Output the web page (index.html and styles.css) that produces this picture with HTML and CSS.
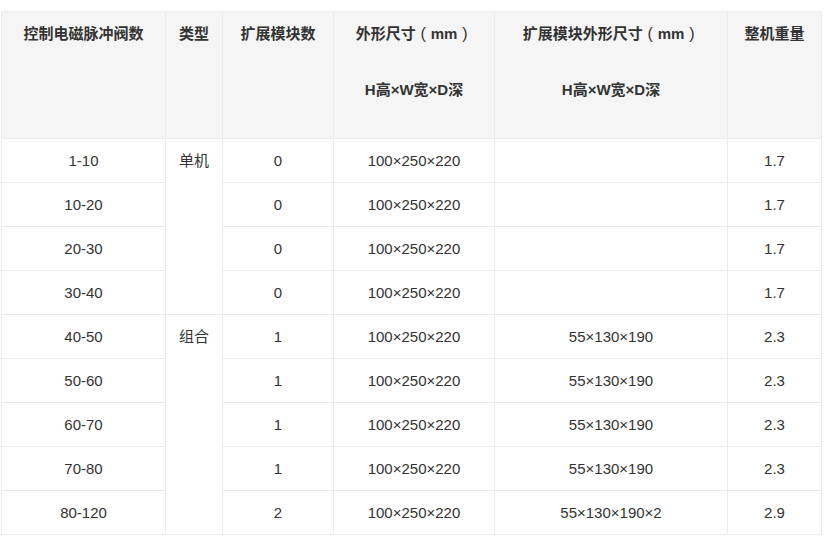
FILE: index.html
```html
<!DOCTYPE html>
<html lang="zh-CN">
<head>
<meta charset="utf-8">
<title>控制器规格</title>
<link rel="stylesheet" href="styles.css">
</head>
<body>
<div class="wrap">
<table class="spec">
<colgroup>
<col class="c1"><col class="c2"><col class="c3"><col class="c4"><col class="c5"><col class="c6">
</colgroup>
<thead>
<tr>
<th>控制电磁脉冲阀数</th>
<th>类型</th>
<th>扩展模块数</th>
<th>外形尺寸<span class="par">(</span>mm<span class="par">)</span><br><br>H高×W宽×D深</th>
<th>扩展模块外形尺寸<span class="par">(</span>mm<span class="par">)</span><br><br>H高×W宽×D深</th>
<th>整机重量</th>
</tr>
</thead>
<tbody>
<tr><td>1-10</td><td rowspan="4">单机</td><td>0</td><td>100×250×220</td><td></td><td>1.7</td></tr>
<tr><td>10-20</td><td>0</td><td>100×250×220</td><td></td><td>1.7</td></tr>
<tr><td>20-30</td><td>0</td><td>100×250×220</td><td></td><td>1.7</td></tr>
<tr><td>30-40</td><td>0</td><td>100×250×220</td><td></td><td>1.7</td></tr>
<tr><td>40-50</td><td rowspan="5">组合</td><td>1</td><td>100×250×220</td><td>55×130×190</td><td>2.3</td></tr>
<tr><td>50-60</td><td>1</td><td>100×250×220</td><td>55×130×190</td><td>2.3</td></tr>
<tr><td>60-70</td><td>1</td><td>100×250×220</td><td>55×130×190</td><td>2.3</td></tr>
<tr><td>70-80</td><td>1</td><td>100×250×220</td><td>55×130×190</td><td>2.3</td></tr>
<tr><td>80-120</td><td>2</td><td>100×250×220</td><td>55×130×190×2</td><td>2.9</td></tr>
</tbody>
</table>
</div>
</body>
</html>
```

FILE: styles.css
```css
html, body {
  margin: 0;
  padding: 0;
  background: #fff;
}
.wrap {
  padding: 11px 0 0 1px;
}
.spec {
  border-collapse: collapse;
  table-layout: fixed;
  width: 820px;
  font-family: "Liberation Sans", "Noto Sans CJK SC", sans-serif;
  font-size: 15px;
  color: #333;
}
.c1 { width: 164px; }
.c2 { width: 57px; }
.c3 { width: 111px; }
.c4 { width: 161px; }
.c5 { width: 233px; }
.c6 { width: 94px; }
.spec th,
.spec td {
  border: 1px solid #ebebeb;
  text-align: center;
  vertical-align: top;
  padding: 0 6px;
}
.spec th {
  background: #f5f5f5;
  font-weight: bold;
  line-height: 28px;
  padding-top: 8px;
  height: 118px;
  box-sizing: border-box;
}
.spec th .par {
  display: inline-block;
  width: 15px;
  text-align: center;
  font-weight: normal;
  font-size: 16px;
}
.spec thead tr {
  height: 127px;
}
.spec td {
  line-height: 21px;
  padding-top: 11px;
  padding-bottom: 11px;
}
.spec tbody tr {
  height: 44px;
}
```
